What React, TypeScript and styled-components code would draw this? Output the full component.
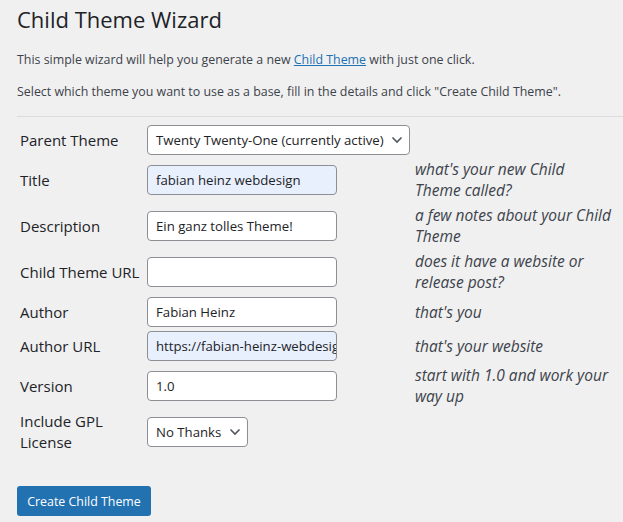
import React from "react";
import styled, { createGlobalStyle } from "styled-components";

const GlobalStyle = createGlobalStyle`
  html, body {
    margin: 0;
    padding: 0;
    background: #f0f0f1;
  }
  body {
    font-family: "Open Sans", "Noto Sans", sans-serif;
    color: #3c434a;
    overflow: hidden;
  }
`;

const Page = styled.div`
  padding: 4px 0 0 17px;
  width: 640px;
`;

const Heading = styled.h1`
  margin: 0;
  font-size: 22px;
  font-weight: 400;
  line-height: 30px;
  color: #1d2327;
`;

const Intro = styled.p<{ $top: number }>`
  margin: 0;
  font-size: 12.4px;
  line-height: 18px;
  margin-top: ${(p) => p.$top}px;

  a {
    color: #2271b1;
    text-decoration: underline;
  }
`;

const Divider = styled.hr`
  border: 0;
  border-top: 1px solid #dcdcde;
  margin: 15px 0 0;
`;

const Form = styled.div`
  display: grid;
  grid-template-columns: 127px 268px 198px;
  align-items: center;
  row-gap: 4px;
  margin: 8px 0 0 3px;
`;

const Label = styled.div`
  font-size: 15px;
  line-height: 21px;
  color: #1d2327;
`;

const Field = styled.div`
  display: flex;
  align-items: center;
`;

const Hint = styled.div`
  font-size: 15.5px;
  line-height: 21px;
  font-style: italic;
  color: #3c434a;
`;

const TextInput = styled.div<{ $filled?: boolean }>`
  box-sizing: border-box;
  width: 190px;
  height: 30px;
  padding: 0 8px;
  border: 1px solid #8c8f94;
  border-radius: 4px;
  background: ${(p) => (p.$filled ? "#e8f0fe" : "#fff")};
  font-size: 13.2px;
  line-height: 28px;
  color: #1d2327;
  white-space: nowrap;
  overflow: hidden;
`;

const Select = styled.div<{ $width: number }>`
  box-sizing: border-box;
  width: ${(p) => p.$width}px;
  height: 30px;
  padding: 0 6px 0 8px;
  display: flex;
  align-items: center;
  justify-content: space-between;
  border: 1px solid #8c8f94;
  border-radius: 4px;
  background: #fff;
  font-size: 13.2px;
  color: #1d2327;
  white-space: nowrap;
`;

const Button = styled.button`
  margin-top: 33px;
  box-sizing: border-box;
  width: 134px;
  height: 30px;
  border: 0;
  border-radius: 3px;
  background: #2271b1;
  color: #fff;
  font-family: inherit;
  font-size: 12.4px;
  padding: 0;
`;

const Chevron = () => (
  <svg width="12" height="8" viewBox="0 0 12 8">
    <polyline
      points="1.5,1.5 6,6 10.5,1.5"
      fill="none"
      stroke="#50575e"
      strokeWidth="1.6"
    />
  </svg>
);

const rows: { label: string; value: string; filled?: boolean; hint: string }[] = [
  { label: "Title", value: "fabian heinz webdesign", filled: true, hint: "what's your new Child Theme called?" },
  { label: "Description", value: "Ein ganz tolles Theme!", hint: "a few notes about your Child Theme" },
  { label: "Child Theme URL", value: "", hint: "does it have a website or release post?" },
  { label: "Author", value: "Fabian Heinz", hint: "that's you" },
  { label: "Author URL", value: "https://fabian-heinz-webdesign.de", filled: true, hint: "that's your website" },
  { label: "Version", value: "1.0", hint: "start with 1.0 and work your way up" },
];

export default function App() {
  return (
    <Page>
      <GlobalStyle />
      <Heading>Child Theme Wizard</Heading>
      <Intro $top={17}>
        This simple wizard will help you generate a new <a href="#">Child Theme</a> with just one click.
      </Intro>
      <Intro $top={14}>
        Select which theme you want to use as a base, fill in the details and click "Create Child Theme".
      </Intro>
      <Divider />
      <Form>
        <Label>Parent Theme</Label>
        <Field>
          <Select $width={263}>
            Twenty Twenty-One (currently active) <Chevron />
          </Select>
        </Field>
        <div />
        {rows.map((r) => (
          <React.Fragment key={r.label}>
            <Label>{r.label}</Label>
            <Field>
              <TextInput $filled={r.filled}>{r.value}</TextInput>
            </Field>
            <Hint>{r.hint}</Hint>
          </React.Fragment>
        ))}
        <Label>
          Include GPL
          <br />
          License
        </Label>
        <Field>
          <Select $width={101}>
            No Thanks <Chevron />
          </Select>
        </Field>
        <div />
      </Form>
      <Button>Create Child Theme</Button>
    </Page>
  );
}
